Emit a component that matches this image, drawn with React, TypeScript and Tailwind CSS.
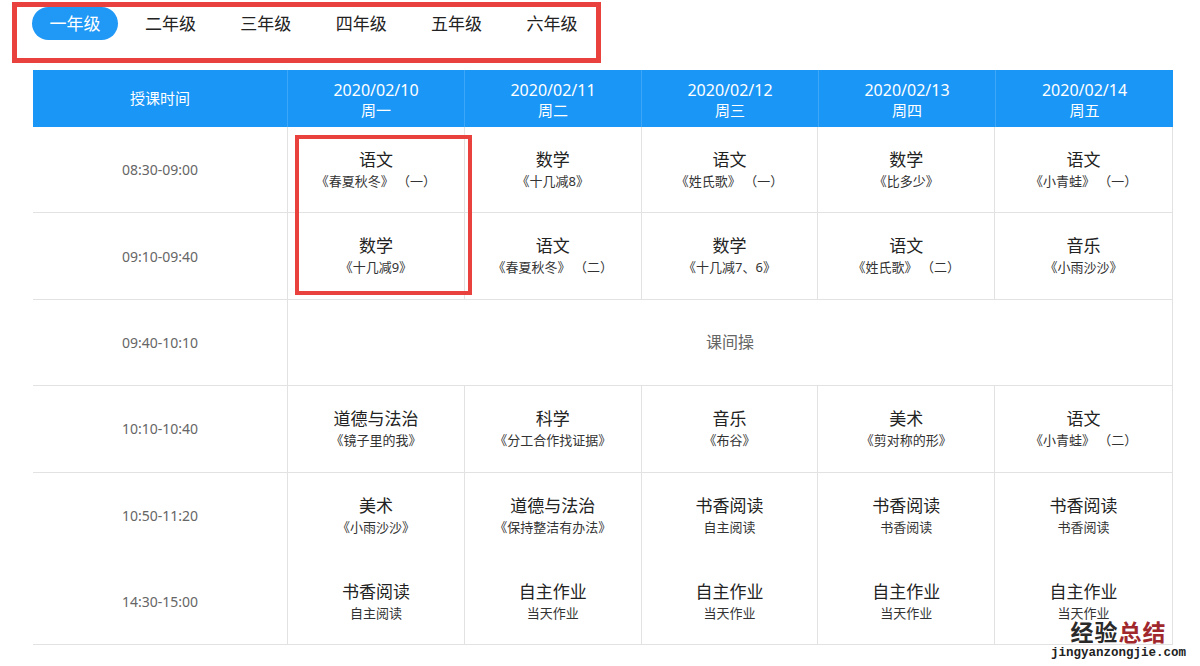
const FONT = { fontFamily: '"Noto Sans", "Noto Sans CJK SC", sans-serif' };

const grades = ['一年级', '二年级', '三年级', '四年级', '五年级', '六年级'];

const days = [
  ['2020/02/10', '周一'],
  ['2020/02/11', '周二'],
  ['2020/02/12', '周三'],
  ['2020/02/13', '周四'],
  ['2020/02/14', '周五'],
];

type Row = { time: string; cells?: string[][]; rest?: string };

const rows: Row[] = [
  {
    time: '08:30-09:00',
    cells: [
      ['语文', '《春夏秋冬》 （一）'],
      ['数学', '《十几减8》'],
      ['语文', '《姓氏歌》 （一）'],
      ['数学', '《比多少》'],
      ['语文', '《小青蛙》 （一）'],
    ],
  },
  {
    time: '09:10-09:40',
    cells: [
      ['数学', '《十几减9》'],
      ['语文', '《春夏秋冬》 （二）'],
      ['数学', '《十几减7、6》'],
      ['语文', '《姓氏歌》 （二）'],
      ['音乐', '《小雨沙沙》'],
    ],
  },
  { time: '09:40-10:10', rest: '课间操' },
  {
    time: '10:10-10:40',
    cells: [
      ['道德与法治', '《镜子里的我》'],
      ['科学', '《分工合作找证据》'],
      ['音乐', '《布谷》'],
      ['美术', '《剪对称的形》'],
      ['语文', '《小青蛙》 （二）'],
    ],
  },
  {
    time: '10:50-11:20',
    cells: [
      ['美术', '《小雨沙沙》'],
      ['道德与法治', '《保持整洁有办法》'],
      ['书香阅读', '自主阅读'],
      ['书香阅读', '书香阅读'],
      ['书香阅读', '书香阅读'],
    ],
  },
  {
    time: '14:30-15:00',
    cells: [
      ['书香阅读', '自主阅读'],
      ['自主作业', '当天作业'],
      ['自主作业', '当天作业'],
      ['自主作业', '当天作业'],
      ['自主作业', '当天作业'],
    ],
  },
];

export default function App() {
  return (
    <div className="relative h-[666px] w-[1200px] overflow-hidden bg-white" style={FONT}>
      {/* grade tabs, boxed in red */}
      <div className="ml-[12px] mt-[2px] h-[61px] w-[589px] border-[5px] border-[#e8413e]">
        <div className="flex gap-[9.4px] pl-[15px]">
          {grades.map((g, i) => (
            <div
              key={g}
              className={
                i === 0
                  ? 'flex h-[33px] w-[86px] items-center justify-center rounded-full bg-[#1f98f6] text-[17px] text-white'
                  : 'flex h-[33px] w-[86px] items-center justify-center text-[17px] text-[#222]'
              }
            >
              {g}
            </div>
          ))}
        </div>
      </div>

      {/* timetable */}
      <div className="relative ml-[33px] mt-[7px] w-[1140px]">
        <div className="grid h-[57px] grid-cols-[255px_repeat(5,1fr)] bg-[#1a96f6] text-white">
          <div className="flex items-center justify-center border-r border-[#3ea6f7] text-[15px]">授课时间</div>
          {days.map(([d, w], i) => (
            <div
              key={d}
              className={
                i < 4
                  ? 'flex flex-col items-center justify-center border-r border-[#3ea6f7] pt-[2px] leading-[20px]'
                  : 'flex flex-col items-center justify-center pt-[2px] leading-[20px]'
              }
            >
              <span className="text-[16px]">{d}</span>
              <span className="text-[15px]">{w}</span>
            </div>
          ))}
        </div>

        {rows.map((r, ri) => (
          <div
            key={r.time}
            className={
              ri === 4
                ? 'grid h-[86.4px] grid-cols-[255px_repeat(5,1fr)] border-r border-[#e2e2e2]'
                : 'grid h-[86.4px] grid-cols-[255px_repeat(5,1fr)] border-b border-r border-[#e2e2e2]'
            }
          >
            <div className="flex items-center justify-center border-r border-[#e2e2e2] text-[14px] text-[#666]">
              {r.time}
            </div>
            {r.rest ? (
              <div className="col-span-5 flex items-center justify-center text-[16px] text-[#666]">{r.rest}</div>
            ) : (
              r.cells!.map(([s, t], ci) => (
                <div
                  key={ci}
                  className={
                    ci < 4
                      ? 'flex flex-col items-center justify-center border-r border-[#e2e2e2]'
                      : 'flex flex-col items-center justify-center'
                  }
                >
                  <span className="text-[17px] leading-[22px] text-[#222]">{s}</span>
                  <span className="whitespace-pre text-[13px] leading-[20px] text-[#333]">{t}</span>
                </div>
              ))
            )}
          </div>
        ))}

        {/* red annotation around Monday's first two lessons */}
        <div className="absolute left-[262px] top-[65px] h-[160px] w-[177px] border-4 border-[#e8413e]" />
      </div>

      {/* watermark */}
      <div className="absolute bottom-[7px] right-[14px] flex flex-col items-center leading-none">
        <div className="text-[23px] font-bold tracking-[1px]">
          <span className="text-[#2a2a2a]">经验</span>
          <span className="text-[#a0282c]">总结</span>
        </div>
        <div
          className="mt-[3px] text-[12.5px] font-bold text-[#222]"
          style={{ fontFamily: '"Liberation Mono", monospace' }}
        >
          jingyanzongjie.com
        </div>
      </div>
    </div>
  );
}
